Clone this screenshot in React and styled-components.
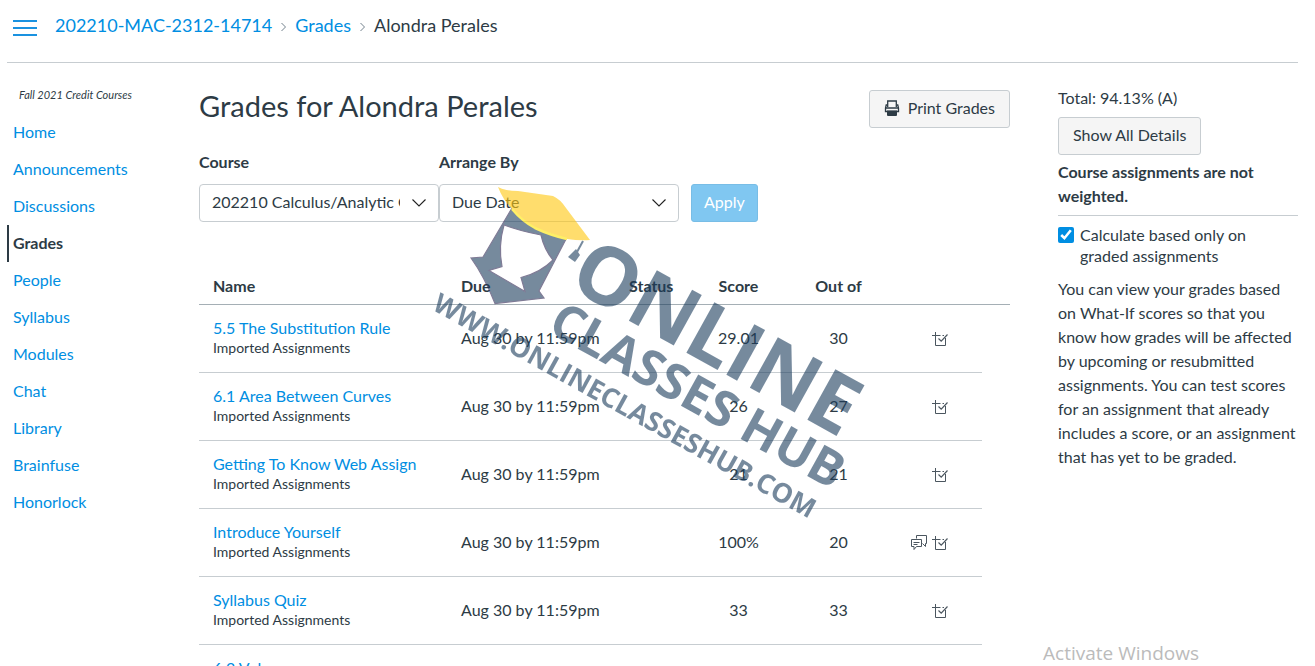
import React, { useState } from "react";
import styled, { createGlobalStyle } from "styled-components";

const navItems = [
  "Home",
  "Announcements",
  "Discussions",
  "Grades",
  "People",
  "Syllabus",
  "Modules",
  "Chat",
  "Library",
  "Brainfuse",
  "Honorlock",
];

const assignments = [
  { name: "5.5 The Substitution Rule", score: "29.01", outOf: "30" },
  { name: "6.1 Area Between Curves", score: "26", outOf: "27" },
  { name: "Getting To Know Web Assign", score: "21", outOf: "21" },
  { name: "Introduce Yourself", score: "100%", outOf: "20", comments: true },
  { name: "Syllabus Quiz", score: "33", outOf: "33" },
  { name: "6.2 Volumes" },
];

export default function App() {
  const [course, setCourse] = useState("calculus");
  const [order, setOrder] = useState("due");
  const [onlyGraded, setOnlyGraded] = useState(true);

  return (
    <>
      <GlobalStyle />
      <Page>
        <Header>
          <MenuButton aria-label="Course navigation menu">
            <span />
            <span />
            <span />
          </MenuButton>
          <Crumbs aria-label="Breadcrumb">
            <Link href="#course">202210-MAC-2312-14714</Link>
            <CrumbArrow />
            <Link href="#grades">Grades</Link>
            <CrumbArrow />
            <span>Alondra Perales</span>
          </Crumbs>
        </Header>

        <Body>
          <Nav>
            <Term>Fall 2021 Credit Courses</Term>
            {navItems.map((item) => (
              <NavLink key={item} href={`#${item}`} $active={item === "Grades"}>
                {item}
              </NavLink>
            ))}
          </Nav>

          <Main>
            <TitleRow>
              <Title>Grades for Alondra Perales</Title>
              <Button>
                <PrinterIcon />
                Print Grades
              </Button>
            </TitleRow>

            <Filters>
              <Field>
                <Label htmlFor="course">Course</Label>
                <SelectBox>
                  <Select
                    id="course"
                    value={course}
                    onChange={(e) => setCourse(e.target.value)}
                  >
                    <option value="calculus">
                      202210 Calculus/Analytic Geometry II
                    </option>
                  </Select>
                  <Caret />
                </SelectBox>
              </Field>
              <Field>
                <Label htmlFor="order">Arrange By</Label>
                <SelectBox>
                  <Select
                    id="order"
                    value={order}
                    onChange={(e) => setOrder(e.target.value)}
                  >
                    <option value="due">Due Date</option>
                  </Select>
                  <Caret />
                </SelectBox>
              </Field>
              <ApplyButton disabled>Apply</ApplyButton>
            </Filters>

            <Table>
              <colgroup>
                <Col />
                <Col $width={168} />
                <Col $width={72} />
                <Col $width={102} />
                <Col $width={98} />
                <Col $width={95} />
                <Col $width={28} />
              </colgroup>
              <thead>
                <tr>
                  <Th>Name</Th>
                  <Th>Due</Th>
                  <Th>Status</Th>
                  <Th $center>Score</Th>
                  <Th $center>Out of</Th>
                  <Th />
                  <Th />
                </tr>
              </thead>
              <tbody>
                {assignments.map((row) => (
                  <tr key={row.name}>
                    <NameTd>
                      <Link href="#assignment">{row.name}</Link>
                      <Group>Imported Assignments</Group>
                    </NameTd>
                    <Td>Aug 30 by 11:59pm</Td>
                    <Td />
                    <Td $center>{row.score}</Td>
                    <Td $center>{row.outOf}</Td>
                    <Td>
                      <Actions>
                        {row.comments && (
                          <IconButton aria-label="Comments">
                            <CommentsIcon />
                          </IconButton>
                        )}
                        <IconButton aria-label="Rubric">
                          <RubricIcon />
                        </IconButton>
                      </Actions>
                    </Td>
                  </tr>
                ))}
              </tbody>
            </Table>
          </Main>

          <Aside>
            <Total>Total: 94.13% (A)</Total>
            <Button>Show All Details</Button>
            <Weighting>Course assignments are not weighted.</Weighting>
            <CheckLabel htmlFor="only-graded">
              <Checkbox
                id="only-graded"
                type="checkbox"
                checked={onlyGraded}
                onChange={(e) => setOnlyGraded(e.target.checked)}
              />
              Calculate based only on graded assignments
            </CheckLabel>
            <Help>
              You can view your grades based on What-If scores so that you know
              how grades will be affected by upcoming or resubmitted
              assignments. You can test scores for an assignment that already
              includes a score, or an assignment that has yet to be graded.
            </Help>
          </Aside>
        </Body>

        <Watermark />
        <Activate>Activate Windows</Activate>
      </Page>
    </>
  );
}

function CrumbArrow() {
  return (
    <Arrow width="5" height="10" viewBox="0 0 5 10" aria-hidden="true">
      <path d="M0.500 1l4 4-4 4" fill="none" stroke="#73818c" />
    </Arrow>
  );
}

function Caret() {
  return (
    <CaretSvg width="16" height="10" viewBox="0 0 16 10" aria-hidden="true">
      <path d="M1.500 1.500L8 8l6.500-6.500" fill="none" stroke="#222" strokeWidth="1.100" />
    </CaretSvg>
  );
}

function PrinterIcon() {
  return (
    <svg width="16" height="16" viewBox="0 0 16 16" aria-hidden="true">
      <path d="M3.700 7V1h8.600v6" fill="none" stroke="#2d3b45" strokeWidth="1.300" />
      <path
        d="M3 5H2.200L1.500 8v3.500h13V8l-.7-3H13M1.500 8h13"
        fill="none"
        stroke="#2d3b45"
        strokeWidth="1.300"
      />
      <path d="M3 10.500h10V15a1 1 0 0 1-1 1H4a1 1 0 0 1-1-1z" fill="#2d3b45" />
    </svg>
  );
}

function RubricIcon() {
  return (
    <svg width="16" height="16" viewBox="0 0 16 16" fill="none" aria-hidden="true">
      <path d="M3.500 1v13.500h10V7" stroke="#4b565f" />
      <path d="M0 4.500h8.500M10.500 4.500h1.500" stroke="#4b565f" />
      <path d="M6.500 7.500l2.700 2.700 6.300-6.700" stroke="#4b565f" strokeWidth="1.200" />
    </svg>
  );
}

function CommentsIcon() {
  return (
    <svg width="18" height="16" viewBox="0 0 18 16" fill="none" stroke="#4b565f" aria-hidden="true">
      <path d="M6.500 3.500v-3h10v8h-1v3l-3-3" />
      <path d="M1.500 4.500h10v7h-5l-2.500 3v-3h-2.500z" />
      <path d="M3.500 7.500h6M3.500 9.500h4" />
    </svg>
  );
}

function Watermark() {
  return (
    <WatermarkSvg width="450" height="350" viewBox="430 180 450 350" aria-hidden="true">
      <defs>
        <filter id="soft">
          <feGaussianBlur stdDeviation="0.700" />
        </filter>
      </defs>
      <g opacity="0.6" filter="url(#soft)">
        <path
          d="M512 208L483 257L471 258Q484 276 495 303.500L544 298L539 291L566 239L535 228ZM504 225Q520 231 541 235Q544 249 553 260Q540 273 521 277.500L525 291.500L489 270.500L502 266.500Q498 246 504 225Z"
          fill="#1b3c5d"
          fillRule="evenodd"
          stroke="#2b2450"
          strokeWidth="1.200"
        />
        <path
          d="M498 187Q505 191 518 191L553 196Q560 199 566 208L590 240Q580 241 567 239Q550 233 535 228Q522 220 512 209Q503 200 498 187Z"
          fill="#ffc60a"
        />
        <path
          d="M512 209Q522 221 535 228Q550 235 567 239"
          fill="none"
          stroke="#ffe600"
          strokeWidth="2.500"
        />
        <path d="M583 241L577 252" stroke="#1b3c5d" strokeWidth="2" />
        <path d="M576 249L580 255L575 262L568 257Z" fill="#1b3c5d" />
        <g fill="#1b3c5d" fontFamily="'Open Sans', 'Noto Sans', sans-serif" fontWeight="700">
          <text transform="translate(566 286) rotate(29)" fontSize="81">
            ONLINE
          </text>
          <text transform="translate(546 331) rotate(29)" fontSize="50">
            CLASSES HUB
          </text>
          <text transform="translate(431 309) rotate(29)" fontSize="27">
            WWW.ONLINECLASSESHUB.COM
          </text>
        </g>
      </g>
    </WatermarkSvg>
  );
}

const GlobalStyle = createGlobalStyle`
  * {
    box-sizing: border-box;
  }

  body {
    margin: 0;
    background: #fff;
    color: #2d3b45;
    font-family: Lato, "Open Sans", sans-serif;
    font-size: 16px;
    line-height: 24px;
  }

  button,
  input,
  select {
    font: inherit;
    color: inherit;
  }
`;

const Page = styled.div`
  position: relative;
  height: 100vh;
  overflow: hidden;
  padding: 0 17px 0 7px;
`;

const Header = styled.header`
  display: flex;
  align-items: flex-start;
  gap: 18px;
  padding: 13px 6px 25px;
  border-bottom: 1px solid #c7cdd1;
`;

const MenuButton = styled.button`
  display: flex;
  flex-direction: column;
  gap: 5px;
  width: 24px;
  padding: 7px 0 0;
  border: 0;
  background: none;

  span {
    height: 2px;
    background: #1a92e0;
  }
`;

const Crumbs = styled.nav`
  display: flex;
  align-items: center;
  gap: 9px;
  font-size: 18px;
`;

const Link = styled.a`
  color: #008ee2;
  text-decoration: none;
`;

const Arrow = styled.svg`
  margin-top: 4px;
`;

const Body = styled.div`
  display: flex;
  align-items: flex-start;
`;

const Nav = styled.nav`
  display: flex;
  flex-direction: column;
  flex: 0 0 192px;
  padding-top: 20px;
`;

const Term = styled.span`
  margin-bottom: 7px;
  padding-left: 12px;
  font-size: 11px;
  font-style: italic;
`;

const NavLink = styled.a`
  padding: 6px 0 7px 4px;
  border-left: 2px solid ${(props) => (props.$active ? "#2d3b45" : "transparent")};
  color: ${(props) => (props.$active ? "#2d3b45" : "#008ee2")};
  font-weight: ${(props) => (props.$active ? 700 : 400)};
  text-decoration: none;
`;

const Main = styled.main`
  flex: 1;
  min-width: 0;
  padding-top: 27px;
`;

const TitleRow = styled.div`
  display: flex;
  align-items: flex-start;
  justify-content: space-between;
`;

const Title = styled.h1`
  margin: 0;
  font-size: 29px;
  font-weight: 400;
  line-height: 32px;
`;

const Button = styled.button`
  display: inline-flex;
  align-items: center;
  gap: 8px;
  height: 38px;
  padding: 0 14px 2px;
  border: 1px solid #c7cdd1;
  border-radius: 3px;
  background: #f5f5f5;
`;

const Filters = styled.div`
  display: flex;
  align-items: flex-end;
  margin-top: 22px;
`;

const Field = styled.div`
  flex: 0 0 240px;
`;

const Label = styled.label`
  display: block;
  margin-bottom: 10px;
  font-weight: 700;
`;

const SelectBox = styled.div`
  position: relative;
`;

const Select = styled.select`
  display: block;
  width: 100%;
  height: 38px;
  padding: 0 38px 2px 12px;
  border: 1px solid #c7cdd1;
  border-radius: 4px;
  background: #fff;
  appearance: none;
`;

const CaretSvg = styled.svg`
  position: absolute;
  top: 14px;
  right: 12px;
  pointer-events: none;
`;

const ApplyButton = styled(Button)`
  margin-left: 12px;
  padding: 0 12px 2px;
  border-color: #78bde6;
  background: #80c7f1;
  color: #fff;
`;

const Table = styled.table`
  width: 100%;
  margin-top: 46px;
  border-collapse: separate;
  border-spacing: 0;
  table-layout: fixed;
`;

const Col = styled.col`
  width: ${(props) => (props.$width ? `${props.$width}px` : "auto")};
`;

const Th = styled.th`
  height: 37px;
  padding: 0 0 0 ${(props) => (props.$center ? 1 : 14)}px;
  border-bottom: 1px solid #a5afb5;
  font-weight: 700;
  text-align: ${(props) => (props.$center ? "center" : "left")};
`;

const Td = styled.td`
  height: 68px;
  padding: 0 0 2px ${(props) => (props.$center ? 1 : 14)}px;
  border-bottom: 1px solid #c7cdd1;
  text-align: ${(props) => (props.$center ? "center" : "left")};
  white-space: nowrap;
`;

const NameTd = styled(Td)`
  padding-bottom: 6px;
`;

const Group = styled.div`
  font-size: 14px;
  line-height: 16px;
`;

const Actions = styled.div`
  display: flex;
  justify-content: flex-end;
  gap: 4px;
  padding: 2px 34px 0 0;
`;

const IconButton = styled.button`
  display: flex;
  padding: 0;
  border: 0;
  background: none;
`;

const Aside = styled.aside`
  flex: 0 0 240px;
  margin-left: 48px;
  padding-top: 23px;
`;

const Total = styled.div`
  margin-bottom: 7px;
`;

const Weighting = styled.div`
  padding: 5px 0 7px;
  border-bottom: 1px solid #c7cdd1;
  font-weight: 700;
`;

const CheckLabel = styled.label`
  display: flex;
  align-items: flex-start;
  gap: 6px;
  padding: 8px 20px 11px 0;
  line-height: 21px;
`;

const Checkbox = styled.input`
  flex: none;
  width: 16px;
  height: 16px;
  margin: 3px 0 0;
  accent-color: #008ee2;
`;

const Help = styled.p`
  margin: 0 -2px 0 0;
`;

const WatermarkSvg = styled.svg`
  position: absolute;
  top: 180px;
  left: 430px;
  pointer-events: none;
`;

const Activate = styled.div`
  position: absolute;
  right: 116px;
  bottom: 1px;
  color: #bbb;
  font-family: "Open Sans", "Noto Sans", sans-serif;
  font-size: 19px;
`;
